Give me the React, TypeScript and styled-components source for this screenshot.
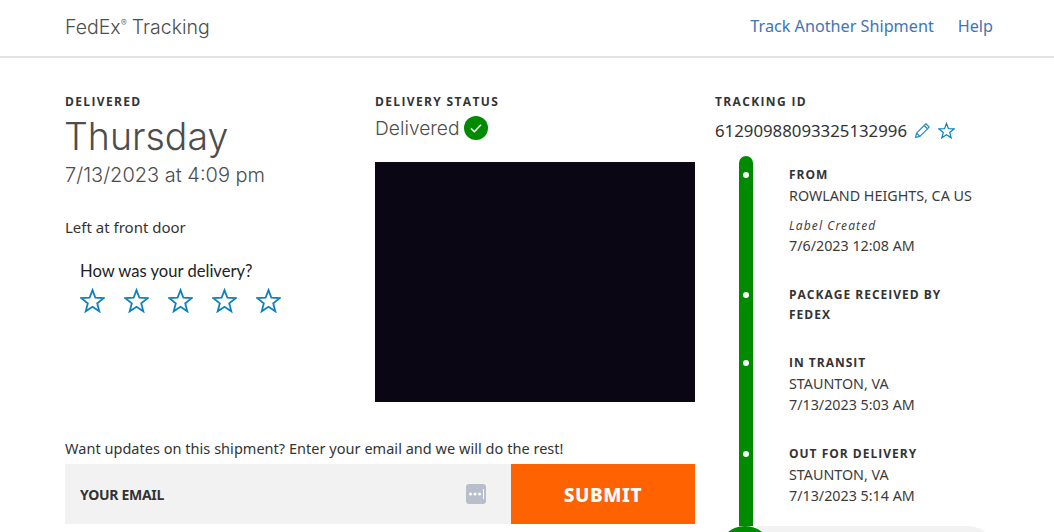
import React from "react";
import styled, { createGlobalStyle } from "styled-components";

const GlobalStyle = createGlobalStyle`
  html, body {
    margin: 0;
    height: 100%;
    overflow: hidden;
    background: #fff;
    color: #333;
    font-family: "Lato", "Liberation Sans", sans-serif;
  }
  * { box-sizing: border-box; }
`;

const StPage = styled.div`
  width: 1054px;
  height: 532px;
  overflow: hidden;
`;

const StHeader = styled.header`
  height: 58px;
  padding: 0 61px 4px 65px;
  display: flex;
  align-items: center;
  justify-content: space-between;
  border-bottom: 2px solid #e3e3e3;
`;

const StBrand = styled.div`
  margin-top: 2px;
  font-family: "Inter", sans-serif;
  font-weight: 300;
  font-size: 19.5px;
  color: #4d4d4d;
  & sup {
    font-size: 9px;
    line-height: 0;
    vertical-align: 8px;
    margin-right: 5px;
  }
`;

const StNav = styled.nav`
  display: flex;
  gap: 24px;
`;

const StNavLink = styled.a`
  font-family: "Noto Sans", sans-serif;
  font-size: 16.2px;
  color: #3f74b5;
`;

const StMain = styled.main`
  display: grid;
  grid-template-columns: 310px 340px 1fr;
  grid-template-rows: auto 1fr;
  padding: 37px 0 0 65px;
`;

const StLabel = styled.div`
  font-family: "Open Sans", sans-serif;
  font-size: 12px;
  line-height: 14px;
  font-weight: 700;
  letter-spacing: 1.35px;
  color: #333;
  text-transform: uppercase;
`;

const StDay = styled.h1`
  margin: 6px 0 0 -1px;
  font-family: "Inter", sans-serif;
  font-weight: 300;
  font-size: 37.5px;
  line-height: 44px;
  color: #4d4d4d;
`;

const StDateLine = styled.div`
  margin-top: 3px;
  font-family: "Inter", sans-serif;
  font-weight: 300;
  font-size: 20px;
  line-height: 26px;
  color: #4d4d4d;
`;

const StNote = styled.p`
  margin: 29px 0 0;
  font-family: "Noto Sans", sans-serif;
  font-size: 15px;
  line-height: 20px;
  color: #333;
`;

const StRating = styled.section`
  margin: 24px 0 0 15px;
`;

const StRatingTitle = styled.div`
  font-size: 16.6px;
  line-height: 20px;
  color: #222;
`;

const StStars = styled.div`
  display: flex;
  gap: 19px;
  margin-top: 7px;
`;

const StCenter = styled.section`
  grid-column: 2;
  display: flex;
  flex-direction: column;
`;

const StStatus = styled.div`
  display: flex;
  align-items: center;
  gap: 4px;
  height: 28px;
  margin-top: 5px;
  font-family: "Inter", sans-serif;
  font-weight: 300;
  font-size: 19.2px;
  color: #4d4d4d;
`;

const StPhoto = styled.div`
  width: 320px;
  height: 240px;
  margin-top: 20px;
  background: #0a0613;
`;

const StRight = styled.section`
  grid-row: 1 / span 2;
  grid-column: 3;
`;

const StIdRow = styled.div`
  display: flex;
  align-items: center;
  height: 24px;
  margin-top: 9px;
  font-family: "Noto Sans", sans-serif;
  font-size: 16.8px;
  color: #333;
`;

const StIconGroup = styled.span`
  display: inline-flex;
  align-items: center;
  gap: 7px;
  margin-left: 7px;
`;

const StTimeline = styled.div`
  margin: 14px 0 0 24px;
`;

const StStop = styled.div<{ $height: number }>`
  display: flex;
  height: ${(p) => p.$height}px;
`;

const StRail = styled.div<{ $first?: boolean }>`
  width: 14px;
  flex: none;
  background: #008a00;
  padding-top: 16px;
  border-radius: ${(p) => (p.$first ? "7px 7px 0 0" : "0")};
`;

const StDot = styled.div`
  width: 6px;
  height: 6px;
  margin: 0 auto;
  border-radius: 50%;
  background: #fff;
`;

const StStopBody = styled.div`
  margin-left: 36px;
  padding-top: 9px;
`;

const StStopTitle = styled(StLabel)`
  width: 170px;
  line-height: 20px;
  letter-spacing: 1px;
`;

const StStopLine = styled.div`
  font-family: "Noto Sans", sans-serif;
  font-size: 14.3px;
  line-height: 21px;
  color: #3b3b3b;
`;

const StStopNote = styled.div`
  margin-top: 10px;
  font-family: "Noto Sans", sans-serif;
  font-style: italic;
  font-size: 12px;
  line-height: 19px;
  letter-spacing: 1.1px;
  color: #444;
`;

const StDeliveredRow = styled.div`
  position: relative;
  width: 238px;
  height: 54px;
  margin-left: 18px;
  background: #f2f2f2;
  border-radius: 0 27px 27px 0;
`;

const StEndBadge = styled.div`
  position: absolute;
  top: 0;
  left: -39px;
  width: 54px;
  height: 54px;
  border-radius: 50%;
  background: #008a00;
`;

const StEmailBlock = styled.section`
  grid-column: 1 / span 2;
  margin-top: 36px;
  width: 630px;
`;

const StEmailPrompt = styled.div`
  font-family: "Noto Sans", sans-serif;
  font-size: 14.5px;
  line-height: 20px;
  letter-spacing: 0.03px;
  color: #333;
`;

const StEmailForm = styled.form`
  display: flex;
  height: 60px;
  margin-top: 6px;
`;

const StEmailField = styled.div`
  flex: 1;
  display: flex;
  align-items: center;
  justify-content: space-between;
  padding: 0 24px 0 15px;
  background: #f2f2f2;
  font-family: "Noto Sans", sans-serif;
  font-size: 14px;
  font-weight: 700;
  letter-spacing: -0.3px;
  color: #333;
`;

const StSubmit = styled.button`
  width: 184px;
  border: none;
  padding: 1px 0 0;
  background: #ff6200;
  color: #fff;
  font-family: "Noto Sans", sans-serif;
  font-size: 19px;
  font-weight: 800;
  letter-spacing: 0.6px;
`;

const Star = ({ size }: { size: number }) => (
  <svg width={size} height={size} viewBox="0 0 26 26" fill="none" stroke="#0f82bd" strokeWidth="1.9" strokeLinejoin="miter">
    <path d="M13 2.2l3 7.9 8.6.5-6.7 5.4 2.2 8.3L13 19.6l-7.1 4.7 2.2-8.3-6.7-5.4 8.6-.5z" />
  </svg>
);

const Pencil = () => (
  <svg width="17" height="17" viewBox="0 0 17 17" fill="none" stroke="#2b8cc4" strokeWidth="1.3" strokeLinejoin="round">
    <path d="M1.6 15.4l1-4.3L11.9 1.8l3.3 3.3-9.3 9.3z" />
    <path d="M10.2 3.5l3.3 3.3M2.6 11.1l3.3 3.3" />
  </svg>
);

const Check = () => (
  <svg width="24" height="24" viewBox="0 0 24 24">
    <circle cx="12" cy="12" r="12" fill="#008a00" />
    <path d="M7 12.4l3.4 3.3L17 8.8" fill="none" stroke="#fff" strokeWidth="1.6" />
  </svg>
);

const PasswordKey = () => (
  <svg width="22" height="22" viewBox="0 0 22 22">
    <rect x="1" y="1" width="20" height="20" rx="3" fill="#b9bfca" />
    <circle cx="5.5" cy="11" r="1.5" fill="#fff" />
    <circle cx="10" cy="11" r="1.5" fill="#fff" />
    <circle cx="14.5" cy="11" r="1.5" fill="#fff" />
    <rect x="18" y="6" width="1" height="10" fill="#fff" />
  </svg>
);

const stops = [
  { height: 120, title: "From", lines: ["ROWLAND HEIGHTS, CA US"], note: "Label Created", after: ["7/6/2023 12:08 AM"], first: true },
  { height: 68, title: "Package received by FedEx", lines: [] },
  { height: 91, title: "In transit", lines: ["STAUNTON, VA", "7/13/2023 5:03 AM"] },
  { height: 91, title: "Out for delivery", lines: ["STAUNTON, VA", "7/13/2023 5:14 AM"] },
];

export default function App() {
  return (
    <StPage>
      <GlobalStyle />
      <StHeader>
        <StBrand>
          FedEx<sup>®</sup>Tracking
        </StBrand>
        <StNav>
          <StNavLink>Track Another Shipment</StNavLink>
          <StNavLink>Help</StNavLink>
        </StNav>
      </StHeader>
      <StMain>
        <section>
          <StLabel>Delivered</StLabel>
          <StDay>Thursday</StDay>
          <StDateLine>7/13/2023 at 4:09 pm</StDateLine>
          <StNote>Left at front door</StNote>
          <StRating>
            <StRatingTitle>How was your delivery?</StRatingTitle>
            <StStars>
              {[0, 1, 2, 3, 4].map((i) => (
                <Star key={i} size={25} />
              ))}
            </StStars>
          </StRating>
        </section>
        <StCenter>
          <StLabel>Delivery status</StLabel>
          <StStatus>
            Delivered <Check />
          </StStatus>
          <StPhoto />
        </StCenter>
        <StRight>
          <StLabel>Tracking ID</StLabel>
          <StIdRow>
            61290988093325132996
            <StIconGroup>
              <Pencil />
              <Star size={17} />
            </StIconGroup>
          </StIdRow>
          <StTimeline>
            {stops.map((s) => (
              <StStop key={s.title} $height={s.height}>
                <StRail $first={s.first}>
                  <StDot />
                </StRail>
                <StStopBody>
                  <StStopTitle>{s.title}</StStopTitle>
                  {s.lines.map((l) => (
                    <StStopLine key={l}>{l}</StStopLine>
                  ))}
                  {s.note && <StStopNote>{s.note}</StStopNote>}
                  {s.after?.map((l) => (
                    <StStopLine key={l}>{l}</StStopLine>
                  ))}
                </StStopBody>
              </StStop>
            ))}
            <StDeliveredRow>
              <StEndBadge />
            </StDeliveredRow>
          </StTimeline>
        </StRight>
        <StEmailBlock>
          <StEmailPrompt>Want updates on this shipment? Enter your email and we will do the rest!</StEmailPrompt>
          <StEmailForm>
            <StEmailField>
              YOUR EMAIL
              <PasswordKey />
            </StEmailField>
            <StSubmit type="button">SUBMIT</StSubmit>
          </StEmailForm>
        </StEmailBlock>
      </StMain>
    </StPage>
  );
}
